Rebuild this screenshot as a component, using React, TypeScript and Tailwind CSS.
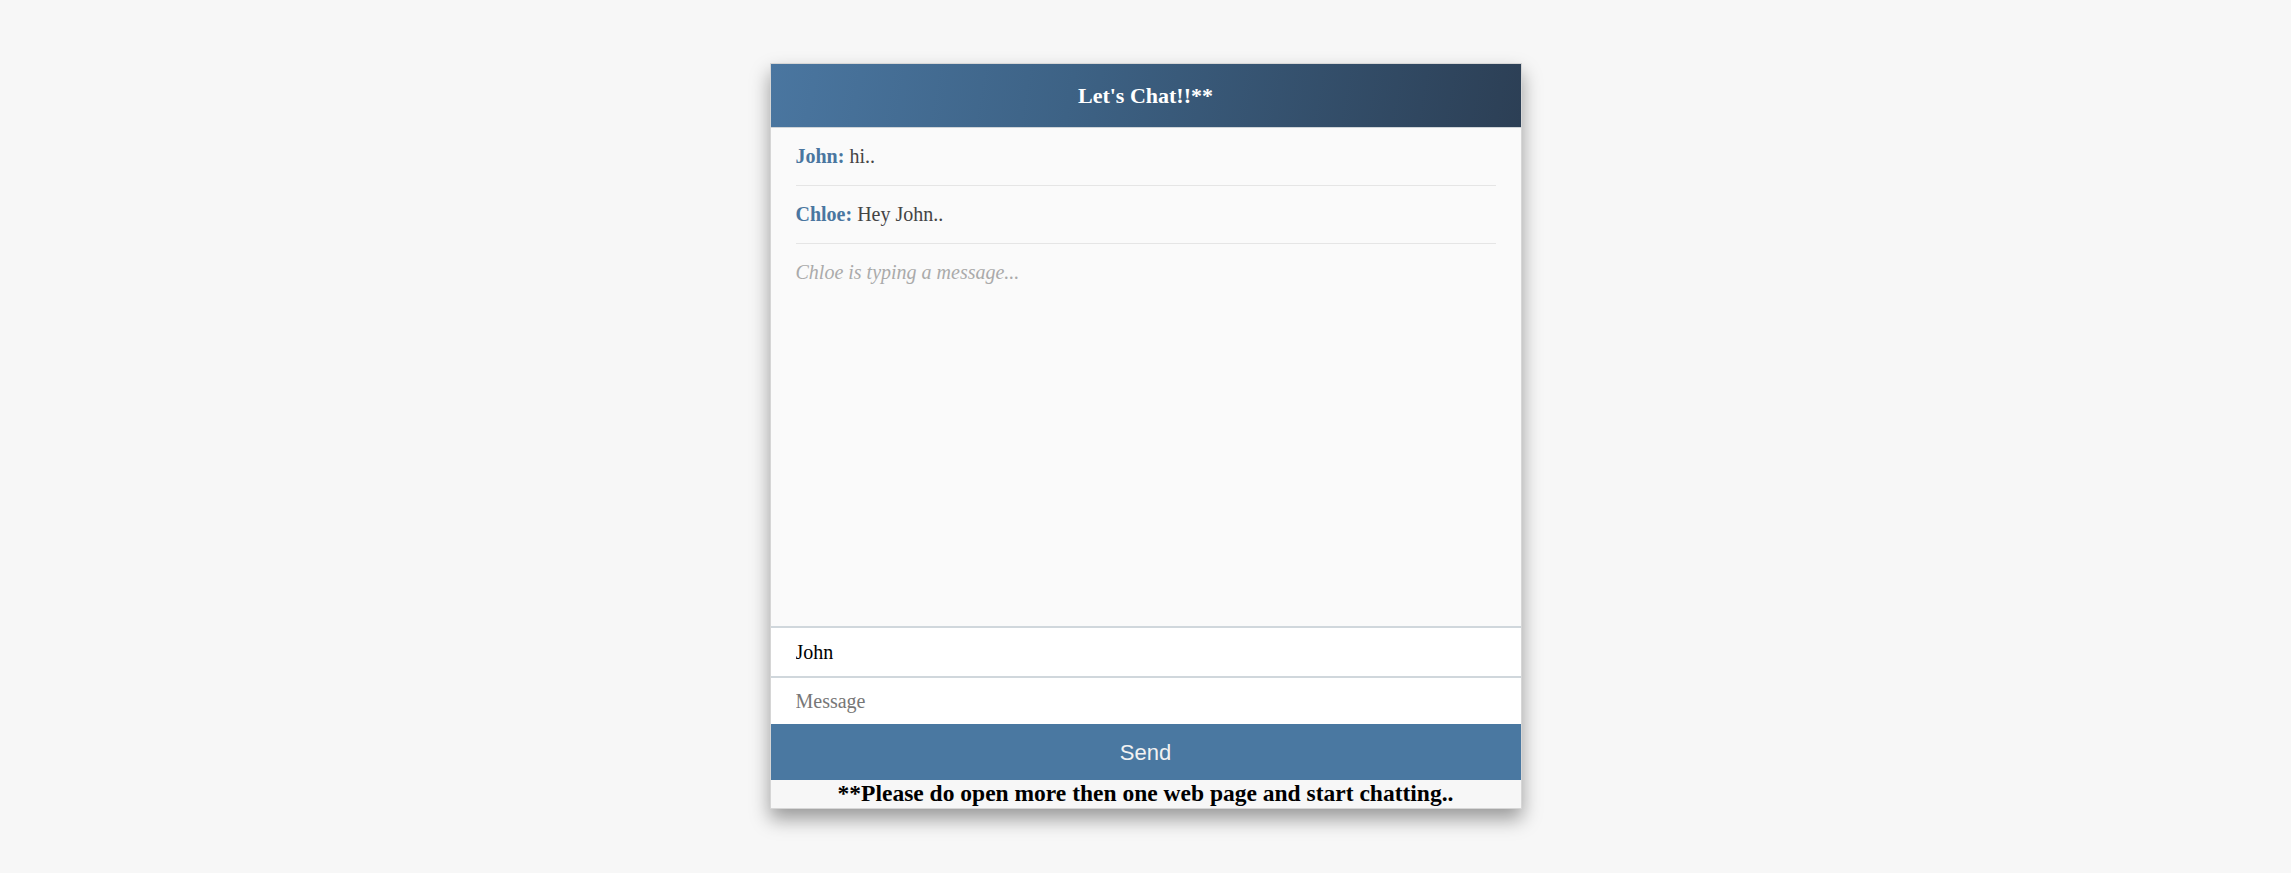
import React from "react";

export default function App() {
  const serif = { fontFamily: '"Liberation Serif", "Times New Roman", serif' };
  return (
    <div className="min-h-screen w-full bg-[#f7f7f7] pt-[63px]" style={serif}>
      <div className="mx-auto flex w-[752px] flex-col border border-[#d6d6d6] bg-[#fafafa] shadow-[0_10px_18px_rgba(0,0,0,0.38)]">
        <div className="flex h-[64px] items-center justify-center border-b border-[#cfd4d8] bg-[linear-gradient(100deg,#4a76a0_0%,#3d6285_40%,#2c3f55_100%)]">
          <h1 className="text-[22px] font-bold leading-none text-white">Let's Chat!!**</h1>
        </div>
        <div className="h-[498px] bg-[#fafafa] px-[25px] text-[20px]">
          <div className="border-b border-[#e5e5e5] py-[16px] leading-[25px] text-[#444]">
            <span className="font-bold text-[#4a76a0]">John:</span> hi..
          </div>
          <div className="border-b border-[#e5e5e5] py-[16px] leading-[25px] text-[#444]">
            <span className="font-bold text-[#4a76a0]">Chloe:</span> Hey John..
          </div>
          <div className="py-[16px] leading-[25px] italic text-[#aaaaaa]">Chloe is typing a message...</div>
        </div>
        <input
          readOnly
          value="John"
          className="h-[50px] w-full border-t-2 border-[#d0d7dc] bg-white px-[25px] text-[20px] text-black outline-none"
          style={serif}
        />
        <input
          readOnly
          placeholder="Message"
          className="h-[48px] w-full border-t-2 border-[#d0d7dc] bg-white px-[25px] text-[20px] text-black outline-none placeholder:text-[#777]"
          style={serif}
        />
        <button
          className="h-[56px] w-full bg-[#4a78a1] text-[22px] text-[#f2f2f2]"
          style={{ fontFamily: '"Liberation Sans", Arial, sans-serif' }}
        >
          Send
        </button>
        <div className="h-[28px] bg-[#f7f7f7] text-center text-[23.5px] font-bold leading-[27px] text-black">
          **Please do open more then one web page and start chatting..
        </div>
      </div>
    </div>
  );
}
